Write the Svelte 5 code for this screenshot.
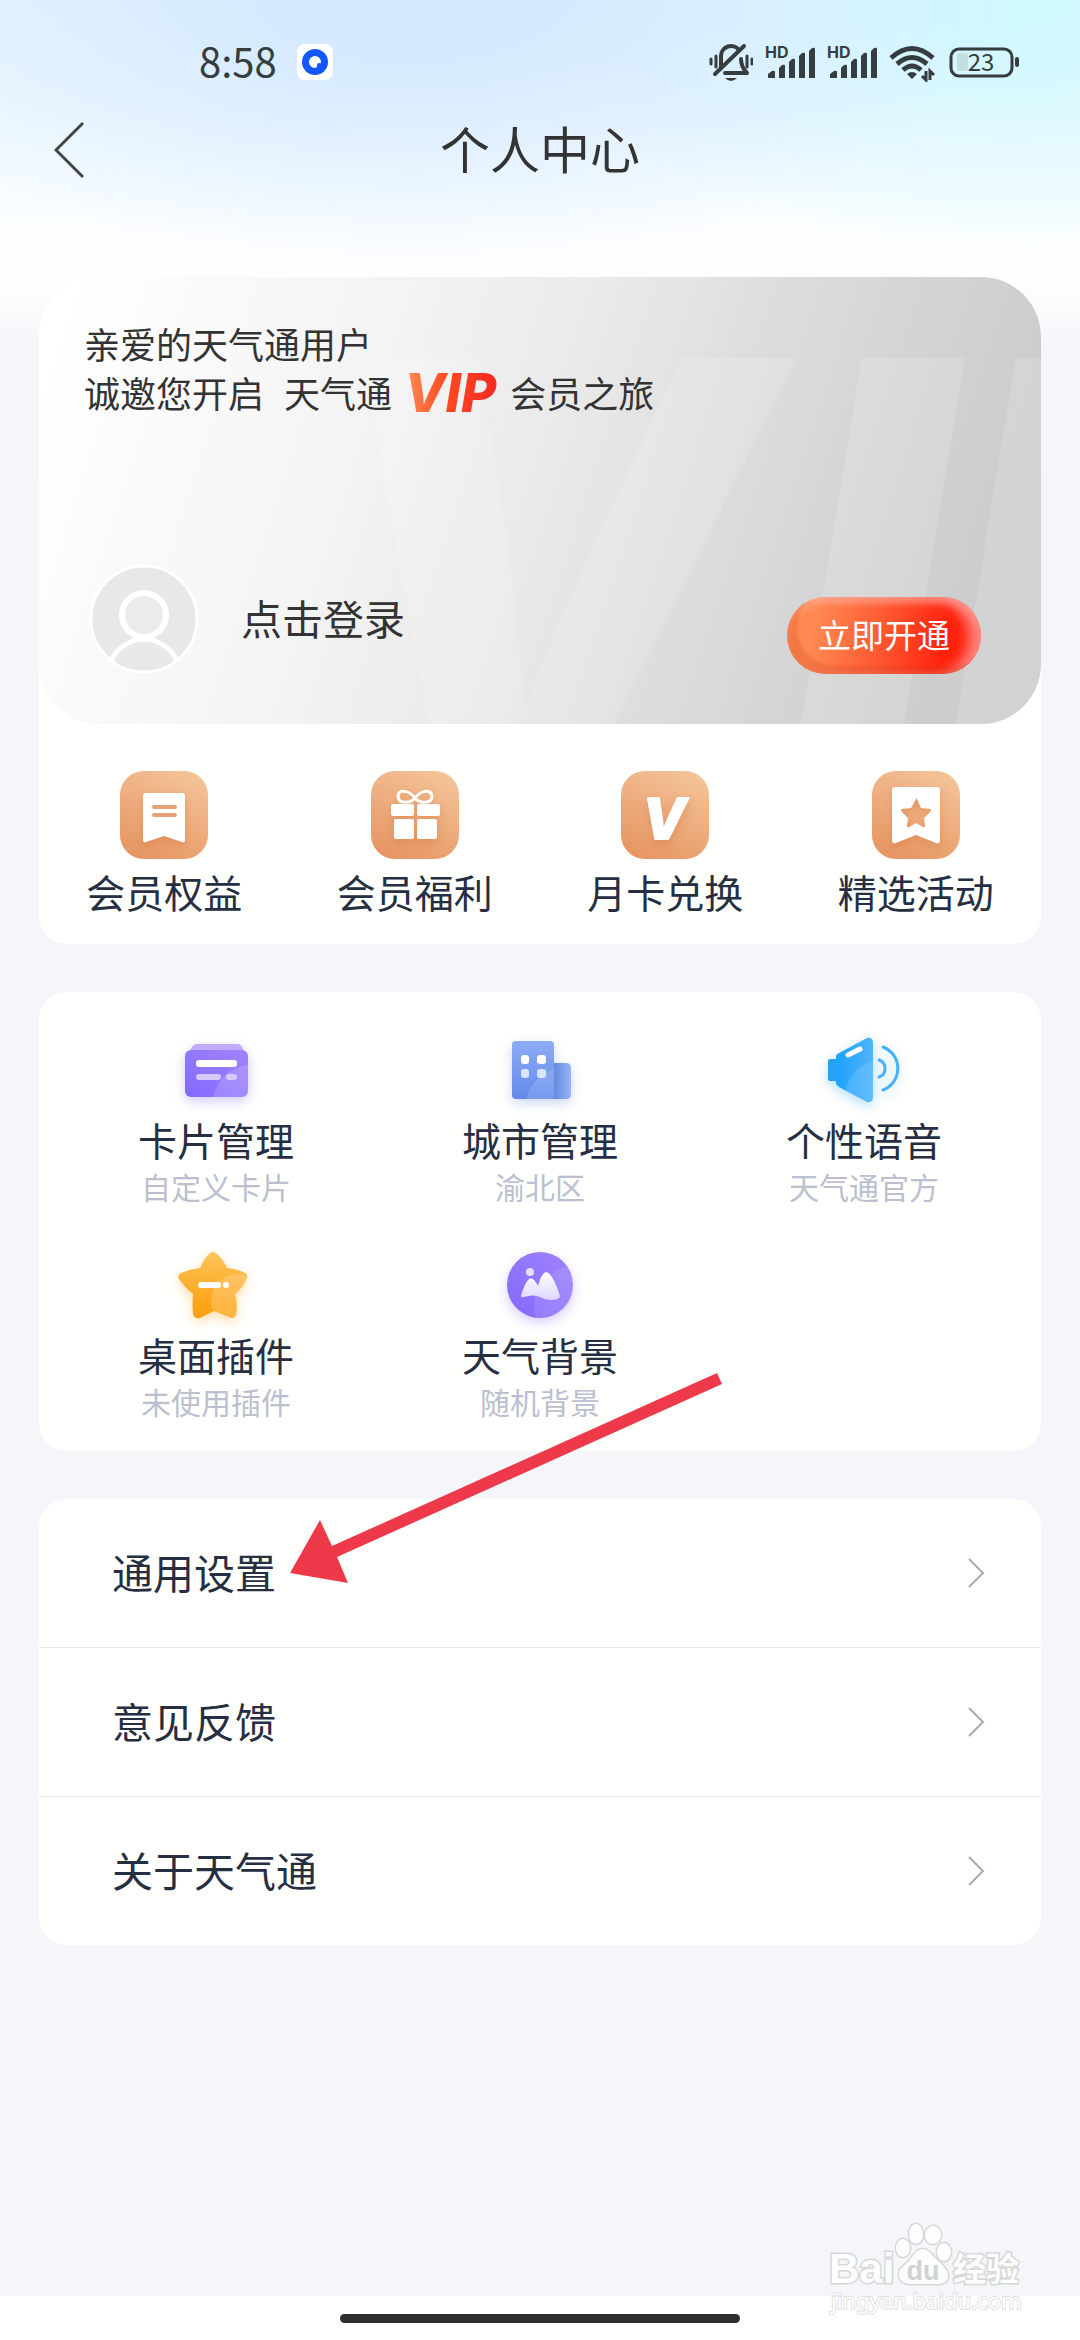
<script lang="ts">
	interface Benefit {
		icon: 'rights' | 'gift' | 'exchange' | 'activity';
		label: string;
	}

	interface Service {
		icon: 'card' | 'city' | 'voice' | 'widget' | 'background';
		label: string;
		note: string;
	}

	const benefits: Benefit[] = [
		{ icon: 'rights', label: '会员权益' },
		{ icon: 'gift', label: '会员福利' },
		{ icon: 'exchange', label: '月卡兑换' },
		{ icon: 'activity', label: '精选活动' }
	];

	const services: Service[] = [
		{ icon: 'card', label: '卡片管理', note: '自定义卡片' },
		{ icon: 'city', label: '城市管理', note: '渝北区' },
		{ icon: 'voice', label: '个性语音', note: '天气通官方' },
		{ icon: 'widget', label: '桌面插件', note: '未使用插件' },
		{ icon: 'background', label: '天气背景', note: '随机背景' }
	];

	const settings = [
		{ href: '#general', label: '通用设置' },
		{ href: '#feedback', label: '意见反馈' },
		{ href: '#about', label: '关于天气通' }
	];

	const battery = 23;
</script>

{#snippet signal()}
	<svg width="50" height="40" viewBox="0 0 50 40" fill="currentColor">
		<text class="hd" x="0" y="16">HD</text>
		<path d="M3 36v-4l4-3q3-1 3 1v6z" />
		<path d="M14 36V26l3-3q3-1 3 1v12z" />
		<path d="M24 36V20l3-3q3-1 3 1v18z" />
		<path d="M34 36V14l3-3q3-1 3 1v24z" />
		<path d="M44 36V9l3-3q3-1 3 1v29z" />
	</svg>
{/snippet}

<div class="page">
	<header>
		<div class="status-bar">
			<div class="status-left">
				<span class="time">8:58</span>
				<svg width="36" height="36" viewBox="0 0 36 36">
					<rect width="36" height="36" rx="8" fill="#fff" />
					<circle cx="18" cy="18" r="13" fill="#1456ff" />
					<path d="M24 18a6 6 0 1 0-6 6q2 0 2-2 0-3 2-3 2 1 2-1" fill="#fff" />
				</svg>
			</div>
			<div class="status-right">
				<svg width="44" height="40" viewBox="0 0 44 40" fill="none" stroke="currentColor" stroke-linecap="round">
					<path d="M2 17v5M7 14v11M38 14v11M43 17v5" stroke-width="3" />
					<path d="M12 25V14a10 10 0 0 1 18-6M32 17q0 8 6 14H16" stroke-width="4" stroke-linejoin="round" />
					<path d="M6 32 35 4" stroke-width="4" />
					<path d="M16 36h12q-6 6-12 0" fill="currentColor" stroke="none" />
				</svg>
				{@render signal()}
				{@render signal()}
				<svg width="48" height="40" viewBox="0 0 48 40" fill="none" stroke="currentColor" stroke-width="5">
					<path d="M2 16q21-19 42 0M8 22q15-13 30 0M14 28q9-8 18 0" />
					<path d="m23 37-5-5q5-4 10 0z" fill="currentColor" stroke="none" />
					<path d="M37 29v9l-4-4M41 38v-9l4 4" stroke-width="3" />
				</svg>
				<svg width="70" height="40" viewBox="0 0 70 40" fill="none">
					<rect x="2" y="7" width="61" height="27" rx="8" stroke="currentColor" stroke-width="3" />
					<rect x="8" y="11" width="11" height="18" rx="3" fill="#c4dde2" />
					<rect x="66" y="15" width="4" height="10" rx="2" fill="currentColor" />
					<text class="battery-text" x="32" y="29" text-anchor="middle">{battery}</text>
				</svg>
			</div>
		</div>
		<div class="title-bar">
			<button class="back" aria-label="返回">
				<svg width="32" height="60" viewBox="0 0 32 60" fill="none" stroke="#444" stroke-width="3">
					<path d="M29 3 2 30l27 27" />
				</svg>
			</button>
			<h1>个人中心</h1>
		</div>
	</header>

	<main>
		<section class="panel vip-panel">
			<div class="vip-card">
				<svg class="vip-mark" width="720" height="366" aria-hidden="true">
					<text y="436" dx="-51 17 -17">VIP</text>
				</svg>
				<div class="invite">
					<p>亲爱的天气通用户</p>
					<p>
						<span>诚邀您开启</span>
						<span class="invite-app">天气通</span>
						<strong class="vip-word">VIP</strong>
						<span>会员之旅</span>
					</p>
				</div>
				<div class="account">
					<button class="login">
						<svg width="110" height="110" viewBox="0 0 110 110" fill="none">
							<circle cx="55" cy="55" r="53" fill="#e8e8e8" stroke="#fff" stroke-width="3" />
							<circle cx="55" cy="51" r="22" fill="#ebebeb" stroke="#fff" stroke-width="6" />
							<path d="M22 97a36 36 0 0 1 66 0" stroke="#fff" stroke-width="5" />
						</svg>
						<span>点击登录</span>
					</button>
					<button class="subscribe">立即开通</button>
				</div>
			</div>
			<div class="benefits">
				{#each benefits as benefit}
					<button class="benefit">
						<span class="tile">
							<svg width="88" height="88" viewBox="0 0 88 88" fill="#fff">
								{#if benefit.icon === 'rights'}
									<path d="M26 22h36q3 0 3 3v44q0 3-3 2l-18-6-18 6q-3 1-3-2V25q0-3 3-3" />
									<path d="M34 36h21M34 44h21" stroke="#e5a277" stroke-width="4" stroke-linecap="round" />
								{:else if benefit.icon === 'gift'}
									<rect x="20" y="33" width="23" height="12" rx="2" />
									<rect x="46" y="33" width="23" height="12" rx="2" />
									<rect x="23" y="48" width="20" height="20" rx="2" />
									<rect x="46" y="48" width="20" height="20" rx="2" />
									<path
										d="M44 27C38 19 28 18 27 25c0 8 12 8 17 2 6-8 16-9 17-2 0 8-12 8-17 2"
										fill="none"
										stroke="#fff"
										stroke-width="3"
									/>
								{:else if benefit.icon === 'exchange'}
									<text class="tile-letter" x="43" y="68" text-anchor="middle">V</text>
								{:else}
									<path
										fill-rule="evenodd"
										d="M23 16h42q3 0 3 3v50q0 4-4 3l-20-8-20 8q-4 1-4-3V19q0-3 3-3m21 12-5 9-9 1q-2 1 0 3l6 6-1 8q0 2 2 1l7-4 7 4q2 1 2-1l-1-8 6-6q2-2 0-3l-9-1-4-9q-1-2-1 0"
									/>
								{/if}
							</svg>
						</span>
						<span class="label">{benefit.label}</span>
					</button>
				{/each}
			</div>
		</section>

		<section class="panel services">
			{#each services as service}
				<button class="service">
					<svg class="glow-{service.icon}" width="84" height="84" viewBox="0 0 84 84">
						{#if service.icon === 'card'}
							<linearGradient id="card-fill" x1="0" y1="1" x2="1" y2="0">
								<stop stop-color="#8268ff" />
								<stop offset="1" stop-color="#a184fb" />
							</linearGradient>
							<clipPath id="card-clip"><rect x="11" y="22" width="63" height="47" rx="6" /></clipPath>
							<path d="M16 24q2-8 7-8h41q4 0 6 8z" fill="#bfacfd" />
							<rect x="11" y="22" width="63" height="47" rx="6" fill="url(#card-fill)" />
							<circle cx="77" cy="75" r="38" fill="#fff" opacity=".16" clip-path="url(#card-clip)" />
							<rect x="22" y="32" width="41" height="7" rx="3" fill="#fff" />
							<rect x="22" y="46" width="25" height="6" rx="3" fill="#d5c9ff" />
							<rect x="52" y="46" width="11" height="6" rx="3" fill="#d5c9ff" />
						{:else if service.icon === 'city'}
							<linearGradient id="city-fill" x1="0" y1="1" x2="0" y2="0">
								<stop stop-color="#648bec" />
								<stop offset="1" stop-color="#8eabf5" />
							</linearGradient>
							<linearGradient id="city-side">
								<stop stop-color="#5f84db" />
								<stop offset="1" stop-color="#96b5f8" />
							</linearGradient>
							<clipPath id="city-clip"><rect x="14" y="13" width="42" height="58" rx="4" /></clipPath>
							<path d="M54 35h14q5 0 5 5v26q0 5-5 5H54z" fill="url(#city-side)" />
							<path d="M18 13h34q4 0 4 4v54H18q-4 0-4-4V17q0-4 4-4" fill="url(#city-fill)" />
							<circle cx="66" cy="78" r="38" fill="#fff" opacity=".14" clip-path="url(#city-clip)" />
							<rect x="23" y="27" width="8" height="9" rx="3" fill="#fff" />
							<rect x="39" y="27" width="9" height="9" rx="3" fill="#fff" />
							<rect x="23" y="41" width="8" height="9" rx="3" fill="#d9e4ff" />
							<rect x="39" y="41" width="9" height="9" rx="3" fill="#d9e4ff" />
						{:else if service.icon === 'voice'}
							<linearGradient id="voice-fill">
								<stop stop-color="#1ca2fd" />
								<stop offset="1" stop-color="#4fb4fa" />
							</linearGradient>
							<clipPath id="voice-clip">
								<path d="M14 29q0-3 3-4l28-15q6-1 6 5v54q0 6-6 5L17 59q-3-2-3-4z" />
							</clipPath>
							<rect x="6" y="31" width="12" height="22" rx="2" fill="#2ba0ee" />
							<path d="M14 29q0-3 3-4l28-15q6-1 6 5v54q0 6-6 5L17 59q-3-2-3-4z" fill="url(#voice-fill)" />
							<circle cx="62" cy="71" r="40" fill="#fff" opacity=".12" clip-path="url(#voice-clip)" />
							<path d="m26 27 12-6" stroke="#fff" stroke-width="5" stroke-linecap="round" />
							<path
								d="M57 32a9 9 0 0 1 0 17M61 19a23 23 0 0 1 0 43"
								fill="none"
								stroke="#46b0fc"
								stroke-width="3"
								stroke-linecap="round"
							/>
						{:else if service.icon === 'widget'}
							<linearGradient id="star-fill" x1="0" y1="1" x2="0" y2="0">
								<stop offset=".2" stop-color="#fea317" />
								<stop offset="1" stop-color="#fdc55c" />
							</linearGradient>
							<clipPath id="star-clip">
								<path d="M35 11q4-4 8 0 6 5 10 14 10 1 18 5 4 2 1 7-4 9-11 14 3 10 1 20-1 6-7 3l-15-6-14 7q-6 1-7-4-1-10 0-20Q11 45 5 36q-2-4 2-6 9-4 19-5 4-9 9-14" />
							</clipPath>
							<path
								d="M35 11q4-4 8 0 6 5 10 14 10 1 18 5 4 2 1 7-4 9-11 14 3 10 1 20-1 6-7 3l-15-6-14 7q-6 1-7-4-1-10 0-20Q11 45 5 36q-2-4 2-6 9-4 19-5 4-9 9-14"
								fill="url(#star-fill)"
							/>
							<circle cx="64" cy="58" r="27" fill="#fff" opacity=".2" clip-path="url(#star-clip)" />
							<rect x="24" y="39" width="23" height="6" rx="3" fill="#fff" />
							<circle cx="52" cy="42" r="3" fill="#fff" />
						{:else}
							<linearGradient id="bg-fill" x1="0" y1="1" x2="1" y2="0">
								<stop stop-color="#8268ff" />
								<stop offset="1" stop-color="#a184fb" />
							</linearGradient>
							<linearGradient id="hill-fill" x1="0" y1="0" x2="0" y2="1">
								<stop stop-color="#fff" />
								<stop offset="1" stop-color="#ded6ff" />
							</linearGradient>
							<clipPath id="bg-clip"><circle cx="42" cy="42" r="33" /></clipPath>
							<circle cx="42" cy="42" r="33" fill="url(#bg-fill)" />
							<circle cx="74" cy="62" r="38" fill="#fff" opacity=".1" clip-path="url(#bg-clip)" />
							<circle cx="32" cy="29" r="4" fill="#e5deff" />
							<path
								d="M23 53q4-14 8-17 4-3 9 7 4-14 8-14 6 0 14 24 0 4-10 4-5 0-10-3-6-3-16 0-3 1-3-1"
								fill="url(#hill-fill)"
							/>
						{/if}
					</svg>
					<span class="label">{service.label}</span>
					<span class="note">{service.note}</span>
				</button>
			{/each}
		</section>

		<nav class="panel settings">
			{#each settings as item}
				<a href={item.href}>
					<span>{item.label}</span>
					<svg width="17" height="30" viewBox="0 0 17 30" fill="none" stroke="#aaa" stroke-width="2">
						<path d="m1 1 14 14L1 29" />
					</svg>
				</a>
			{/each}
			<svg class="pointer" width="432" height="212" viewBox="0 0 432 212" fill="#ed394a" aria-hidden="true">
				<path d="M0 200 30 147l12 26L427 0l5 11L47 184l11 26z" />
			</svg>
		</nav>
	</main>

	<footer>
		<svg class="watermark" width="200" height="104" viewBox="0 0 200 104" aria-hidden="true">
			<g class="outlined">
				<text class="wm-bai" x="3" y="63">Bai</text>
				<path d="M97 29q5 0 12 9 8 7 12 13 4 12-8 13H83q-13-2-9-14 4-5 10-10 6-11 13-11" />
				<ellipse cx="77" cy="28" rx="7" ry="9" />
				<ellipse cx="90" cy="14" rx="7" ry="10" />
				<ellipse cx="107" cy="15" rx="8" ry="9" transform="rotate(15 107 15)" />
				<ellipse cx="118" cy="32" rx="7" ry="9" />
				<text class="wm-cn" x="127" y="61">经验</text>
				<text class="wm-url" x="5" y="89">jingyan.baidu.com</text>
			</g>
			<text class="wm-du" x="97" y="60" text-anchor="middle">du</text>
		</svg>
		<span class="home-indicator"></span>
	</footer>
</div>

<style>
	:global(body) {
		margin: 0;
		background: #fff;
	}

	.page {
		display: flex;
		flex-direction: column;
		min-height: 100vh;
		font-family: 'Noto Sans CJK SC', sans-serif;
		color: #262f42;
		background:
			radial-gradient(ellipse 56% 260px at 38% 0, #d5e9ff 20%, rgba(213, 233, 255, 0)),
			radial-gradient(ellipse 45% 250px at 94% 0, #d0f8ff 10%, rgba(208, 248, 255, 0)),
			linear-gradient(#e6f5ff, #fcfeff 240px, #fcfeff 280px, #f5f6f9 350px);
	}

	button {
		margin: 0;
		padding: 0;
		border: 0;
		background: none;
		color: inherit;
		font: inherit;
	}

	svg {
		display: block;
		flex-shrink: 0;
	}

	.status-bar {
		display: flex;
		align-items: center;
		justify-content: space-between;
		padding: 38px 61px 0 199px;
		height: 48px;
		color: #363d40;
	}

	.status-left,
	.status-right {
		display: flex;
		align-items: center;
	}

	.status-left {
		gap: 20px;
	}

	.status-right {
		gap: 12px;
	}

	.time {
		padding-bottom: 4px;
		font-size: 40px;
		line-height: 44px;
	}

	.hd {
		font: 700 16px Inter, sans-serif;
	}

	.battery-text {
		font-size: 24px;
		fill: currentColor;
	}

	.title-bar {
		display: grid;
		grid-template-columns: 1fr auto 1fr;
		align-items: center;
		height: 128px;
		padding: 0 54px;
	}

	.back {
		justify-self: start;
	}

	h1 {
		margin: 0;
		padding-bottom: 6px;
		font-size: 50px;
		font-weight: 400;
		line-height: 64px;
		color: #333;
	}

	main {
		display: flex;
		flex-direction: column;
		gap: 48px;
		flex: 1;
		padding: 63px 39px 0;
	}

	.panel {
		background: #fffffd;
		border-radius: 28px;
	}

	.vip-panel {
		border-radius: 60px 60px 28px 28px;
	}

	.vip-card {
		position: relative;
		overflow: hidden;
		padding: 42px 60px 50px 45px;
		border-radius: 60px;
		background: linear-gradient(108deg, #fff 2%, #f3f3f3 33%, #e8e8e8 52%, #dcdcdc 66%, #cfcfcf 85%, #c9c9c9);
		color: #333;
	}

	.vip-mark {
		position: absolute;
		right: -34px;
		bottom: 0;
	}

	.vip-mark text {
		font: italic 800 600px Inter, sans-serif;
		fill: #fff;
		opacity: 0.15;
	}

	.invite,
	.account {
		position: relative;
	}

	.invite p {
		display: flex;
		align-items: center;
		margin: 0;
		font-size: 36px;
		line-height: 49px;
	}

	.invite-app {
		margin-left: 20px;
	}

	.vip-word {
		padding: 0 14px 0 12px;
		font-family: Inter, sans-serif;
		font-size: 54px;
		font-style: italic;
		font-weight: 800;
		line-height: 49px;
		background: linear-gradient(90deg, #ff8f58 10%, #ff4a22 45%, #f92b22 85%);
		background-clip: text;
		color: transparent;
	}

	.account {
		display: flex;
		align-items: flex-end;
		justify-content: space-between;
		margin-top: 147px;
		padding-left: 5px;
	}

	.login {
		display: flex;
		align-items: center;
		gap: 42px;
		font-size: 41px;
	}

	.login span,
	.settings span {
		padding-bottom: 5px;
	}

	.subscribe {
		padding: 11px 31px 13px;
		border-radius: 39px;
		font-size: 33px;
		line-height: 53px;
		color: #fff;
		background: linear-gradient(100deg, #ff8a52 15%, #ff5a32 48%, #ff220c 80%);
		box-shadow:
			inset 10px -8px 3px rgba(190, 50, 10, 0.2),
			inset -12px 2px 12px rgba(255, 170, 170, 0.7),
			inset 0 6px 6px rgba(255, 190, 160, 0.4);
	}

	.benefits {
		display: grid;
		grid-template-columns: repeat(4, 1fr);
		padding: 47px 0 30px;
	}

	.benefit,
	.service {
		display: flex;
		flex-direction: column;
		align-items: center;
	}

	.tile {
		border-radius: 24px;
		background: linear-gradient(25deg, #e69461 5%, #f5c79d);
	}

	.tile svg {
		filter: drop-shadow(0 4px 4px rgba(205, 110, 50, 0.35));
	}

	.tile-letter {
		font: italic 800 56px Inter, sans-serif;
		stroke: #fff;
		stroke-width: 2px;
		stroke-linejoin: round;
	}

	.label {
		font-size: 39px;
		line-height: 46px;
	}

	.benefit .label {
		margin-top: 9px;
	}

	.service .label {
		margin-top: 4px;
	}

	.note {
		margin-top: 4px;
		font-size: 30px;
		line-height: 40px;
		color: #bbbfd0;
	}

	.services {
		display: grid;
		grid-template-columns: repeat(3, 1fr);
		row-gap: 37px;
		padding: 36px 15px 30px;
	}

	.glow-card,
	.glow-background {
		filter: drop-shadow(0 4px 6px rgba(130, 104, 255, 0.35));
	}

	.glow-city {
		filter: drop-shadow(0 4px 6px rgba(100, 139, 236, 0.35));
	}

	.glow-voice {
		filter: drop-shadow(0 4px 6px rgba(28, 162, 253, 0.35));
	}

	.glow-widget {
		filter: drop-shadow(0 4px 6px rgba(254, 163, 23, 0.35));
	}

	.settings {
		position: relative;
	}

	.settings a {
		display: flex;
		align-items: center;
		justify-content: space-between;
		height: 148px;
		padding: 0 56px 0 73px;
		font-size: 41px;
		color: inherit;
		text-decoration: none;
	}

	.settings a + a {
		border-top: 1px solid #e6e8ec;
	}

	.pointer {
		position: absolute;
		top: -126px;
		left: 251px;
	}

	footer {
		position: relative;
		display: flex;
		align-items: center;
		justify-content: center;
		height: 44px;
		background: #fff;
	}

	.home-indicator {
		width: 37%;
		height: 9px;
		border-radius: 5px;
		background: #2e2e2e;
	}

	.watermark {
		position: absolute;
		right: 54px;
		bottom: 16px;
	}

	.outlined {
		fill: #fcfdfd;
		stroke: #d6d8d8;
		stroke-width: 3px;
		paint-order: stroke;
	}

	.wm-bai {
		font: 700 42px 'Liberation Sans', sans-serif;
	}

	.wm-cn {
		font-size: 33px;
		font-weight: 700;
	}

	.wm-url {
		font: 22px 'Noto Sans', sans-serif;
		stroke: #e0e2e2;
		stroke-width: 2px;
	}

	.wm-du {
		font: 700 27px 'Liberation Sans', sans-serif;
		fill: #d0d2d2;
	}
</style>
